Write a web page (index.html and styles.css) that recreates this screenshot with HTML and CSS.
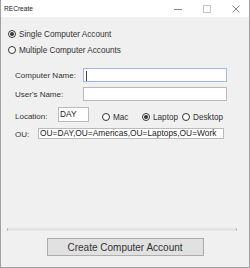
FILE: index.html
```html
<!DOCTYPE html>
<html lang="en">
<head>
    <meta charset="UTF-8">
    <meta name="viewport" content="width=device-width, initial-scale=1.0">
    <title>RECreate</title>
    <link rel="stylesheet" href="styles.css">
</head>
<body>
    <div class="window">
        <div class="titlebar">
            <span class="title">RECreate</span>
            <div class="controls">
                <svg width="8" height="8" viewBox="0 0 8 8"><line x1="0" y1="4.5" x2="8" y2="4.5" stroke="#8a8a8a" stroke-width="1"/></svg>
                <svg width="8" height="8" viewBox="0 0 8 8"><rect x="0.5" y="0.5" width="7" height="7" fill="none" stroke="#c4c4c4" stroke-width="1"/></svg>
                <svg width="8" height="8" viewBox="0 0 8 8"><path d="M0.5 0.5 L7.5 7.5 M7.5 0.5 L0.5 7.5" stroke="#8a8a8a" stroke-width="1"/></svg>
            </div>
        </div>

        <div class="client">
            <div class="mode">
                <div class="radio"><span class="dot checked"></span>Single Computer Account</div>
                <div class="radio"><span class="dot"></span>Multiple Computer Accounts</div>
            </div>

            <div class="form">
                <div class="row">
                    <span class="lbl lbl-name">Computer Name:</span>
                    <div class="field field-long field-focus"><span class="caret"></span></div>
                </div>
                <div class="row">
                    <span class="lbl lbl-name">User's Name:</span>
                    <div class="field field-long"></div>
                </div>
                <div class="row">
                    <span class="lbl lbl-loc">Location:</span>
                    <div class="field field-day">DAY</div>
                    <div class="opts">
                        <div class="radio opt"><span class="dot"></span>Mac</div>
                        <div class="radio opt"><span class="dot checked"></span>Laptop</div>
                        <div class="radio opt"><span class="dot"></span>Desktop</div>
                    </div>
                </div>
                <div class="row">
                    <span class="lbl lbl-ou">OU:</span>
                    <div class="field field-ou">OU=DAY,OU=Americas,OU=Laptops,OU=Work</div>
                </div>
            </div>

            <div class="spacer"></div>

            <div class="progress"></div>
            <div class="actions">
                <button class="btn">Create Computer Account</button>
            </div>
        </div>
    </div>
</body>
</html>
```

FILE: styles.css
```css
* {
    margin: 0;
    padding: 0;
    box-sizing: border-box;
}

body {
    font-family: 'Liberation Sans', Arial, sans-serif;
    background: #ffffff;
    color: #333333;
}

.window {
    width: 250px;
    height: 268px;
    display: flex;
    flex-direction: column;
    border: 1px solid #a0a0a0;
    border-top: none;
}

.titlebar {
    height: 17px;
    background: #ffffff;
    display: flex;
    align-items: center;
    justify-content: space-between;
}

.title {
    font-size: 6.6px;
    color: #222222;
    padding-left: 3px;
}

.controls {
    display: flex;
    align-items: center;
    gap: 21px;
    padding-right: 9px;
}

.controls svg {
    display: block;
}

.client {
    flex: 1;
    display: flex;
    flex-direction: column;
    background: #f0f0f0;
    padding: 9px 0 11px 0;
}

.mode {
    padding-left: 7px;
}

.radio {
    display: flex;
    align-items: center;
    height: 16px;
    font-size: 8.2px;
    color: #333333;
    white-space: nowrap;
}

.dot {
    width: 8px;
    height: 8px;
    border: 1px solid #333333;
    border-radius: 50%;
    background: #ffffff;
    margin-right: 3px;
    display: flex;
    align-items: center;
    justify-content: center;
    flex-shrink: 0;
}

.dot.checked::after {
    content: '';
    width: 4px;
    height: 4px;
    border-radius: 50%;
    background: #333333;
}

.form {
    margin-top: 10px;
    padding-left: 14px;
    display: flex;
    flex-direction: column;
    gap: 5px;
}

.row {
    display: flex;
    align-items: center;
}

.lbl {
    font-size: 8px;
    color: #333333;
    white-space: nowrap;
}

.lbl-name {
    width: 68px;
}

.lbl-loc {
    width: 43px;
    margin-top: 3px;
}

.lbl-ou {
    width: 23px;
    margin-top: 2px;
}

.field {
    background: #ffffff;
    border: 1px solid #bababa;
    height: 14px;
    font-size: 8.4px;
    line-height: 12px;
    padding: 0 2px;
    color: #222222;
    white-space: nowrap;
    overflow: hidden;
}

.field-long {
    width: 144px;
}

.field-focus {
    border-color: #a4b6ea;
}

.caret {
    display: inline-block;
    width: 1px;
    height: 10px;
    background: #444444;
    vertical-align: middle;
}

.field-day {
    width: 31px;
    height: 15px;
    line-height: 13px;
    padding: 0 1px;
}

.field-ou {
    width: 186px;
    height: 11px;
    line-height: 9px;
    padding: 0 1px;
}

.opts {
    display: flex;
    margin-left: 13px;
    margin-top: 5px;
}

.opt {
    width: 40px;
    height: 12px;
}

.spacer {
    flex: 1;
}

.progress {
    margin-left: 6px;
    width: 230px;
    height: 3px;
    background: #e4e4e4;
    border-left: 1px solid #bcbcbc;
    border-right: 1px solid #bcbcbc;
}

.actions {
    margin-top: 7px;
    display: flex;
    justify-content: center;
}

.btn {
    width: 157px;
    height: 18px;
    background: #e1e1e1;
    border: 1px solid #adadad;
    font-family: 'Liberation Sans', Arial, sans-serif;
    font-size: 10px;
    color: #333333;
    cursor: pointer;
}
```
